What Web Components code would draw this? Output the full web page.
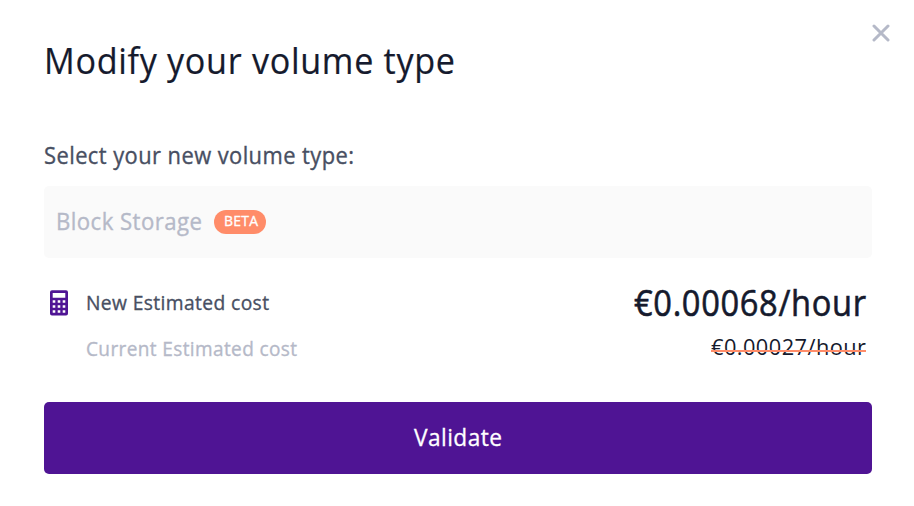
<!DOCTYPE html>
<html lang="en"><head><meta charset="utf-8"><title>Modify volume</title>
<style>body{margin:0;background:#fff;font-family:"Open Sans","Noto Sans",sans-serif;}</style></head><body>
<script>
// Text fitted to a given advance width, so metrics stay stable across fonts.
class FitText extends HTMLElement{
  connectedCallback(){
    if(this.shadowRoot)return;
    const w=this.getAttribute('width');
    this.attachShadow({mode:'open'}).innerHTML=`<style>:host{display:block;width:${w}px;white-space:nowrap;flex:none}span{display:inline-block;transform-origin:0 50%;letter-spacing:.02em}</style><span><slot></slot></span>`;
    const s=this.shadowRoot.querySelector('span');
    s.style.transform=`scaleX(${w/(s.getBoundingClientRect().width-parseFloat(getComputedStyle(s).letterSpacing))})`;
  }
}
class CalculatorIcon extends HTMLElement{
  constructor(){super();this.attachShadow({mode:'open'}).innerHTML=`<style>:host{display:block;width:18px;height:26px}svg{display:block}</style>
  <svg width="18" height="26" viewBox="0 0 18 26"><path fill="#4f1494" fill-rule="evenodd" d="M2 .3h14a2 2 0 0 1 2 2v21.200a2 2 0 0 1-2 2H2a2 2 0 0 1-2-2V2.300a2 2 0 0 1 2-2ZM2.700 3v4.800h12.600V3ZM2.700 10.200v2.600h2.600v-2.600Zm5 0v2.600h2.600v-2.600Zm5 0v2.600h2.600v-2.600ZM2.700 15.200v2.600h2.600v-2.600Zm5 0v2.600h2.600v-2.600Zm5 0v2.600h2.600v-2.600ZM2.700 20.200v2.600h2.600v-2.600Zm5 0v2.600h2.600v-2.600Zm5 0v2.600h2.600v-2.600Z"/></svg>`;}
}
class VolumeField extends HTMLElement{
  constructor(){super();this.attachShadow({mode:'open'}).innerHTML=`<style>:host{display:flex;align-items:center;height:72px;box-sizing:border-box;padding:0 12px;gap:12px;background:#fafafa;border-radius:5px;color:#b5b9c8;font-size:23.500px;line-height:32px;-webkit-text-stroke:.35px}::slotted(fit-text){padding-bottom:2px}</style><slot></slot>`;}
}
class BetaBadge extends HTMLElement{
  constructor(){super();this.attachShadow({mode:'open'}).innerHTML=`<style>:host{display:flex;justify-content:center;width:52px;height:24px;box-sizing:border-box;padding-left:2px;border-radius:12px;background:#ff8c69;color:#fff;font-size:14px;line-height:22px}</style><slot></slot>`;}
}
class ValidateButton extends HTMLElement{
  constructor(){super();this.attachShadow({mode:'open'}).innerHTML=`<style>:host{display:flex;height:72px;box-sizing:border-box;padding-bottom:2px;align-items:center;justify-content:center;border-radius:5px;background:#4f1494;color:#fff;font-size:23.500px;line-height:32px;-webkit-text-stroke:.3px}</style><slot></slot>`;}
}
class StruckPrice extends HTMLElement{
  constructor(){super();this.attachShadow({mode:'open'}).innerHTML=`<style>:host{display:block;position:relative;line-height:32px}:host::after{content:"";position:absolute;left:0;right:0;top:19px;height:2px;background:#ff8c69}</style><slot></slot>`;}
}
customElements.define('fit-text',FitText);
customElements.define('calculator-icon',CalculatorIcon);
customElements.define('volume-field',VolumeField);
customElements.define('beta-badge',BetaBadge);
customElements.define('validate-button',ValidateButton);
customElements.define('struck-price',StruckPrice);
class VolumeDialog extends HTMLElement{
  constructor(){super();this.attachShadow({mode:'open'}).innerHTML=`<style>
  :host{display:block;position:relative;width:914px;height:506px;box-sizing:border-box;padding:37px 42px 0 44px;color:#151a2d}
  .close{position:absolute;left:872px;top:24px}
  h1{margin:0;font-size:37px;font-weight:400;line-height:46px;height:46px;-webkit-text-stroke:.2px}
  .label{font-size:23px;line-height:30px;height:30px;margin:57px 0 16px;color:#484f62;-webkit-text-stroke:.35px}
  .row{display:flex;align-items:center;justify-content:space-between;padding:0 6px;height:46px}
  .new{margin-top:22px;color:#484f62}
  .left{display:flex;align-items:center;gap:18px}
  .left fit-text,.cur>fit-text{font-size:20.500px;line-height:26px;padding-bottom:2px;-webkit-text-stroke:.35px}
  .price{font-size:36px;line-height:46px;-webkit-text-stroke:.6px;color:#151a2d}
  .cur{padding-left:42px;color:#b5b9c8}
  struck-price{font-size:22.500px;color:#151a2d;margin-bottom:4px}
  validate-button{margin-top:30px}
  </style>
  <svg class="close" width="18" height="18" viewBox="0 0 18 18"><path d="M2 2l14 14M16 2L2 16" stroke="#b5b9c8" stroke-width="3" stroke-linecap="round"/></svg>
  <h1><fit-text width="411">Modify your volume type</fit-text></h1>
  <div class="label"><fit-text width="310">Select your new volume type:</fit-text></div>
  <div><volume-field><fit-text width="146">Block Storage</fit-text><beta-badge><fit-text width="34">BETA</fit-text></beta-badge></volume-field>
  <div class="row new"><div class="left"><calculator-icon></calculator-icon><fit-text width="183">New Estimated cost</fit-text></div><fit-text class="price" width="232">€0.00068/hour</fit-text></div>
  <div class="row cur"><fit-text width="211">Current Estimated cost</fit-text><struck-price><fit-text width="155">€0.00027/hour</fit-text></struck-price></div>
  <validate-button><fit-text width="88">Validate</fit-text></validate-button></div>`;}
}
customElements.define('volume-dialog',VolumeDialog);
</script>
<volume-dialog></volume-dialog>
</body></html>
